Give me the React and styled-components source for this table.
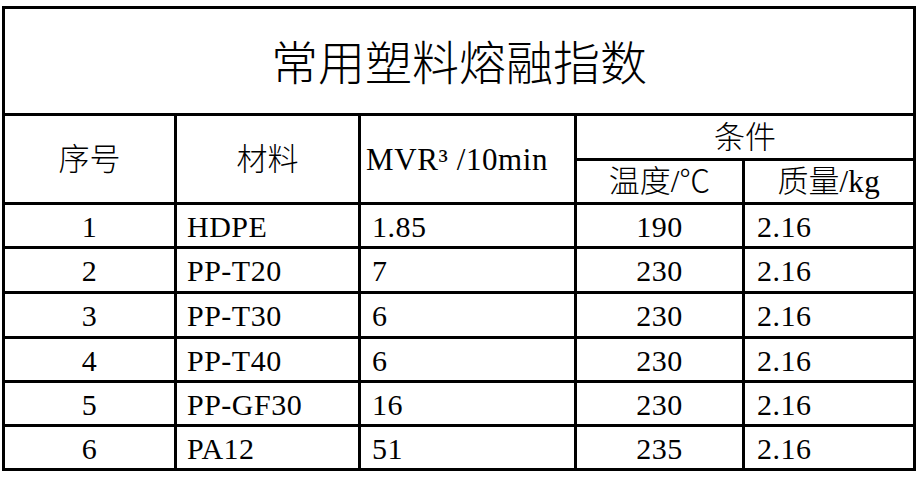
import React from "react";
import styled, { createGlobalStyle } from "styled-components";

const Global = createGlobalStyle`
  html, body { margin: 0; padding: 0; background: #ffffff; }
  body { font-family: "Liberation Serif", "Noto Sans CJK SC", serif; color: #000; }
`;

const Grid = styled.div`
  display: grid;
  grid-template-columns: 172px 184px 216px 168px 171px;
  grid-template-rows: 107px 45px 44px 44px 45px 45px 44px 44px 44px;
  width: max-content;
  margin: 6px 0 0 2px;
  border-top: 3px solid #000;
  border-left: 3px solid #000;
`;

const Cell = styled.div`
  box-sizing: border-box;
  display: flex;
  align-items: center;
  justify-content: ${(p) => (p.$left ? "flex-start" : "center")};
  padding-left: ${(p) => (p.$pad ? `${p.$pad}px` : "0")};
  padding-top: 2px;
  border-right: 3px solid #000;
  border-bottom: 3px solid #000;
  font-size: 30px;
  letter-spacing: 0.5px;
  line-height: 1;
  white-space: nowrap;
  grid-column: ${(p) => p.$col || "auto"};
  grid-row: ${(p) => p.$row || "auto"};
`;

const HeadCell = styled(Cell)`
  font-size: 31px;
  letter-spacing: 0;
  font-weight: 300;
  padding-top: 0;
`;

const Latin = styled.span`
  font-family: "Liberation Serif", serif;
  font-weight: 400;
  font-size: 31px;
  letter-spacing: 0.6px;
`;

const Title = styled(Cell)`
  grid-column: 1 / span 5;
  font-family: "Noto Sans CJK SC", sans-serif;
  font-size: 47px;
  font-weight: 300;
  letter-spacing: 0;
  padding-top: 0;
  padding-bottom: 4px;
`;

const rows = [
  ["1", "HDPE", "1.85", "190", "2.16"],
  ["2", "PP-T20", "7", "230", "2.16"],
  ["3", "PP-T30", "6", "230", "2.16"],
  ["4", "PP-T40", "6", "230", "2.16"],
  ["5", "PP-GF30", "16", "230", "2.16"],
  ["6", "PA12", "51", "235", "2.16"],
];

export default function App() {
  return (
    <>
      <Global />
      <Grid>
        <Title>常用塑料熔融指数</Title>
        <HeadCell $row="2 / span 2">序号</HeadCell>
        <HeadCell $row="2 / span 2">材料</HeadCell>
        <HeadCell $row="2 / span 2" $left $pad={5}>
          <Latin>MVR³ /10min</Latin>
        </HeadCell>
        <HeadCell $col="4 / span 2">条件</HeadCell>
        <HeadCell>温度/℃</HeadCell>
        <HeadCell>质量/<Latin>kg</Latin></HeadCell>
        {rows.map((r) => (
          <React.Fragment key={r[0]}>
            <Cell>{r[0]}</Cell>
            <Cell $left $pad={10}>{r[1]}</Cell>
            <Cell $left $pad={11}>{r[2]}</Cell>
            <Cell>{r[3]}</Cell>
            <Cell $left $pad={12}>{r[4]}</Cell>
          </React.Fragment>
        ))}
      </Grid>
    </>
  );
}
